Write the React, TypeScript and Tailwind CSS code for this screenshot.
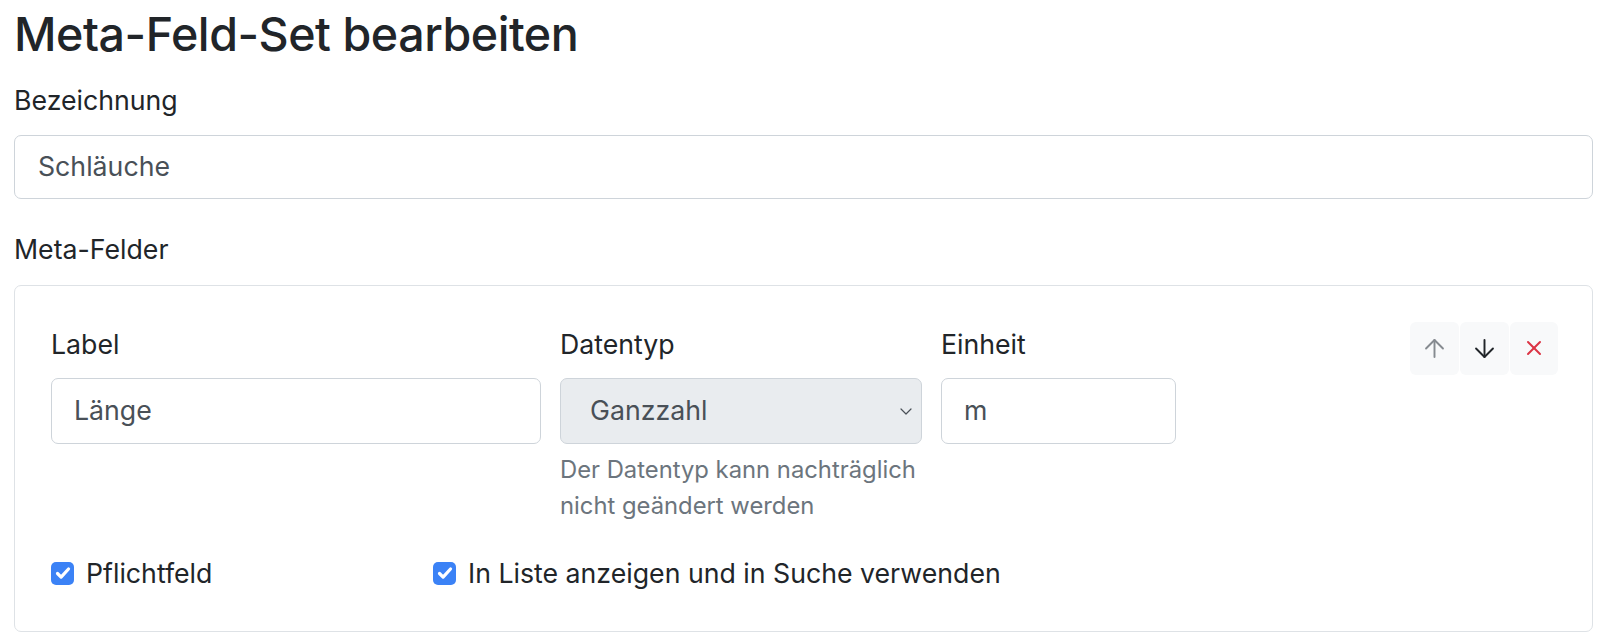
import { ArrowUp, ArrowDown, X } from 'lucide-react';

function Checkbox({ label }: { label: string }) {
  return (
    <label className="flex items-center gap-[12px]">
      <span className="flex h-[23px] w-[23px] items-center justify-center rounded-[5px] bg-[#3b82f6]">
        <svg viewBox="0 0 20 20" className="h-[20px] w-[20px]" fill="none">
          <path d="M4.5 10.5l3.6 3.6L15.5 6" stroke="#fff" strokeWidth="3.2" strokeLinecap="round" strokeLinejoin="round" />
        </svg>
      </span>
      <span>{label}</span>
    </label>
  );
}

export default function App() {
  return (
    <div className="min-h-screen bg-white pl-[14px] pr-[7px] pt-[7px] font-['Inter',sans-serif] text-[26.7px] leading-[39px] text-[#212529]">
      <h1 className="mb-[18px] text-[46.6px] font-medium leading-[1.2] tracking-[-0.01em]">Meta-Feld-Set bearbeiten</h1>

      <div className="mb-[15px]">Bezeichnung</div>
      <div className="flex h-[64px] items-center rounded-[7px] border border-[#ced4da] px-[23px] text-[#495057]">
        Schläuche
      </div>

      <div className="mb-[16px] mt-[31px]">Meta-Felder</div>

      <div className="rounded-[7px] border border-[#dee2e6] pb-[38px] pl-[36px] pr-[34px] pt-[39px]">
        <div className="flex items-start">
          <div className="w-[490px]">
            <div className="mb-[14px]">Label</div>
            <div className="flex h-[66px] items-center rounded-[7px] border border-[#ced4da] px-[22px] text-[#495057]">
              Länge
            </div>
          </div>

          <div className="ml-[19px] w-[362px]">
            <div className="mb-[14px]">Datentyp</div>
            <div className="flex h-[66px] items-center justify-between rounded-[7px] border border-[#ced4da] bg-[#e9ecef] pl-[29px] pr-[7px] text-[#495057]">
              <span>Ganzzahl</span>
              <svg viewBox="0 0 16 16" className="h-[16px] w-[16px]" fill="none">
                <path d="M3 6l5 5 5-5" stroke="#495057" strokeWidth="1.2" strokeLinecap="round" strokeLinejoin="round" />
              </svg>
            </div>
            <div className="mt-[8px] text-[23.8px] leading-[36px] text-[#6c757d]">
              Der Datentyp kann nachträglich nicht geändert werden
            </div>
          </div>

          <div className="ml-[19px] w-[235px]">
            <div className="mb-[14px]">Einheit</div>
            <div className="flex h-[66px] items-center rounded-[7px] border border-[#ced4da] px-[22px] text-[#495057]">
              m
            </div>
          </div>

          <div className="-mt-[3px] ml-auto flex gap-[1px]">
            <button className="flex h-[53px] w-[49px] items-center justify-center rounded-[6px] bg-[#f8f9fa] text-[#868b90]">
              <ArrowUp size={29} strokeWidth={1.6} />
            </button>
            <button className="flex h-[53px] w-[49px] items-center justify-center rounded-[6px] bg-[#f8f9fa] text-[#212529]">
              <ArrowDown size={29} strokeWidth={1.6} />
            </button>
            <button className="flex h-[53px] w-[48px] items-center justify-center rounded-[6px] bg-[#f8f9fa] text-[#dc3545]">
              <X size={24} strokeWidth={2} />
            </button>
          </div>
        </div>

        <div className="mt-[30px] flex">
          <div className="w-[382px]">
            <Checkbox label="Pflichtfeld" />
          </div>
          <Checkbox label="In Liste anzeigen und in Suche verwenden" />
        </div>
      </div>
    </div>
  );
}
